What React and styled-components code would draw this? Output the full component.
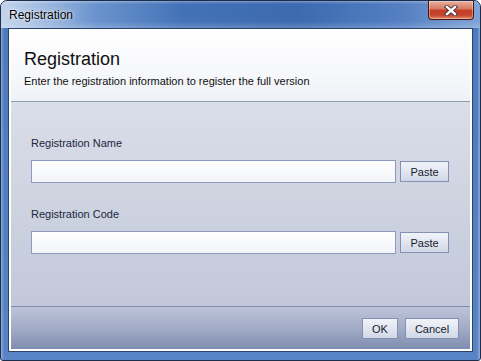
import React from 'react'
import styled, { createGlobalStyle } from 'styled-components'

const GlobalStyle = createGlobalStyle`
  html, body {
    margin: 0;
    padding: 0;
    background: #ffffff;
  }
  body {
    font-family: "Liberation Sans", Arial, sans-serif;
  }
  * { box-sizing: border-box; }
`

const Window = styled.div`
  width: 481px;
  height: 361px;
  display: flex;
  flex-direction: column;
  border: 1px solid #1d2e4c;
  border-radius: 7px 7px 3px 3px;
  overflow: hidden;
  background:
    linear-gradient(to right, rgba(255,255,255,0.35) 0px, rgba(255,255,255,0) 3px, rgba(255,255,255,0) calc(100% - 3px), rgba(255,255,255,0.35) 100%),
    linear-gradient(to bottom, #4b79bd 0%, #5883c4 100%);
`

const TitleBar = styled.div`
  height: 27px;
  display: flex;
  align-items: flex-start;
  padding-left: 8px;
  background:
    linear-gradient(to bottom, rgba(255,255,255,0.3) 0px, rgba(255,255,255,0) 3px, rgba(255,255,255,0) 20px, rgba(255,255,255,0.18) 27px),
    linear-gradient(to right, #c3d4ec 0%, #a7c0e3 7%, #6a93cd 20%, #4472b7 38%, #3c69b0 62%, #5580c2 84%, #7fa3d6 100%);
`

const TitleText = styled.div`
  padding-top: 7px;
  font-size: 12px;
  line-height: 14px;
  color: #000;
  text-shadow: 0 0 6px rgba(255,255,255,0.9), 0 0 2px rgba(255,255,255,0.8);
`

const CloseButton = styled.div`
  margin-left: auto;
  margin-right: 6px;
  width: 46px;
  height: 19px;
  display: flex;
  align-items: center;
  justify-content: center;
  border: 1px solid #4a1810;
  border-top: none;
  border-radius: 0 0 4px 4px;
  background: linear-gradient(to bottom, #eab0a0 0%, #d97a64 42%, #c43e27 52%, #c6432b 78%, #df8a6c 100%);
  box-shadow: inset 0 0 0 1px rgba(255,255,255,0.35);
`

const Client = styled.div`
  flex: 1;
  margin: 0 7px 8px;
  border: 1px solid #2b446c;
  padding: 2px;
  background: #ffffff;
  display: flex;
  flex-direction: column;
`

const Header = styled.div`
  height: 71px;
  padding: 17px 13px 0;
  border-bottom: 1px solid #8e9ab7;
  background: linear-gradient(to bottom, #ffffff 0%, #f7f8fb 60%, #eef1f6 100%);
`

const Heading = styled.div`
  font-size: 18px;
  line-height: 22px;
  color: #111;
`

const Subtitle = styled.div`
  margin-top: 5px;
  font-size: 11px;
  line-height: 13px;
  color: #111;
`

const Body = styled.div`
  flex: 1;
  padding: 35px 21px 0 20px;
  background: linear-gradient(to bottom, #dadee8 0%, #c2c8d9 100%);
`

const Label = styled.div`
  font-size: 11px;
  line-height: 13px;
  color: #1b2740;
  margin-top: ${p => p.$first ? '0' : '25px'};
  margin-bottom: 10px;
`

const Row = styled.div`
  display: flex;
  align-items: center;
  gap: 4px;
`

const Input = styled.input`
  flex: 1;
  height: 23px;
  border: 1px solid #8d9abd;
  background: linear-gradient(to bottom, #ffffff 0%, #f2f4f8 100%);
  outline: none;
  font: 11px "Liberation Sans", Arial, sans-serif;
  padding: 0 4px;
`

const Button = styled.button`
  width: ${p => p.$w}px;
  height: 21px;
  padding: 0;
  border: 1px solid #8390b3;
  background: linear-gradient(to bottom, #f1f3f8 0%, #e2e6f0 50%, #d2d7e6 100%);
  font: 11px "Liberation Sans", Arial, sans-serif;
  color: #141d30;
`

const Footer = styled.div`
  height: 43px;
  border-top: 1px solid #7d8bae;
  padding: 11px 11px 0 0;
  display: flex;
  justify-content: flex-end;
  gap: 7px;
  background: linear-gradient(to bottom, #bcc3d8 0%, #a3acc7 50%, #7f8db1 100%);
`

function CloseGlyph() {
  return (
    <svg width="14" height="11" viewBox="0 0 14 11">
      <path d="M3 2 L11 9 M11 2 L3 9" stroke="#3b3030" strokeWidth="4.2" strokeLinecap="square" />
      <path d="M3 2 L11 9 M11 2 L3 9" stroke="#ffffff" strokeWidth="2.4" strokeLinecap="square" />
    </svg>
  )
}

export default function App() {
  return (
    <>
      <GlobalStyle />
      <Window>
        <TitleBar>
          <TitleText>Registration</TitleText>
          <CloseButton><CloseGlyph /></CloseButton>
        </TitleBar>
        <Client>
          <Header>
            <Heading>Registration</Heading>
            <Subtitle>Enter the registration information to register the full version</Subtitle>
          </Header>
          <Body>
            <Label $first>Registration Name</Label>
            <Row>
              <Input />
              <Button $w={49}>Paste</Button>
            </Row>
            <Label>Registration Code</Label>
            <Row>
              <Input />
              <Button $w={49}>Paste</Button>
            </Row>
          </Body>
          <Footer>
            <Button $w={36}>OK</Button>
            <Button $w={54}>Cancel</Button>
          </Footer>
        </Client>
      </Window>
    </>
  )
}
